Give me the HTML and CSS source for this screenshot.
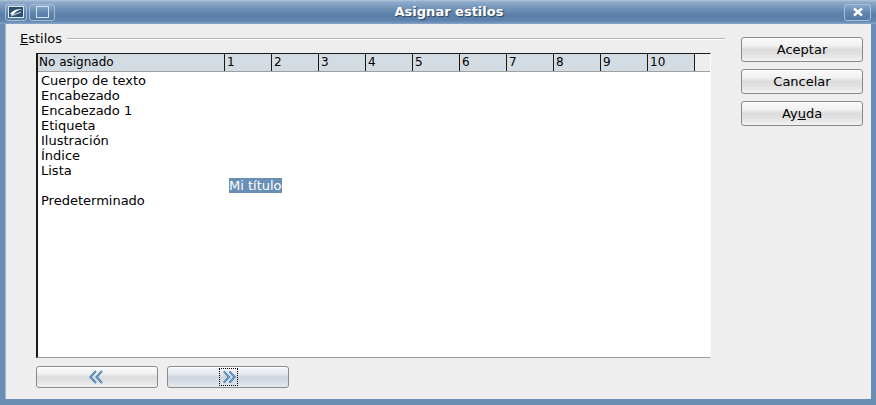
FILE: index.html
```html
<!DOCTYPE html>
<html>
<head>
  <title>Asignar estilos</title>
  <link rel="stylesheet" href="styles.css">
</head>
<body>
  <div class="window">
    <div class="titlebar">
      <div class="tb-left">
        <div class="tb-btn tb-menu">
          <svg width="16" height="12" viewBox="0 0 16 12">
            <rect x="0.5" y="0.5" width="15" height="11" fill="#2f4f6f" stroke="#dfe8f2"/>
            <path d="M2 8 C5 4, 9 3, 14 3 C10 4, 7 6, 5 9 Z" fill="#fff"/>
            <path d="M3 10 L13 6" stroke="#cfe0f0" stroke-width="1"/>
          </svg>
        </div>
        <div class="tb-btn tb-max">
          <span class="tb-square"></span>
        </div>
      </div>
      <div class="tb-title">Asignar estilos</div>
      <div class="tb-right">
        <div class="tb-btn tb-close">
          <svg width="12" height="10" viewBox="0 0 12 10">
            <path d="M2 1.5 L10 8.5 M10 1.5 L2 8.5" stroke="#fff" stroke-width="2.4"/>
          </svg>
        </div>
      </div>
    </div>

    <div class="content">
      <div class="styles-group">
        <div class="group-label"><span><u>E</u>stilos</span><div class="group-line"></div></div>

        <div class="table">
          <div class="thead">
            <div class="th th-first">No asignado</div>
            <div class="th">1</div>
            <div class="th">2</div>
            <div class="th">3</div>
            <div class="th">4</div>
            <div class="th">5</div>
            <div class="th">6</div>
            <div class="th">7</div>
            <div class="th">8</div>
            <div class="th">9</div>
            <div class="th">10</div>
            <div class="th th-rest"></div>
          </div>
          <div class="tbody">
            <div class="row">Cuerpo de texto</div>
            <div class="row">Encabezado</div>
            <div class="row">Encabezado 1</div>
            <div class="row">Etiqueta</div>
            <div class="row">Ilustración</div>
            <div class="row">Índice</div>
            <div class="row">Lista</div>
            <div class="row row-level"><span class="selected">Mi título</span></div>
            <div class="row">Predeterminado</div>
          </div>
        </div>

        <div class="nav-buttons">
          <button class="btn nav-btn">
            <svg width="18" height="14" viewBox="0 0 18 14">
              <path d="M8 1 L2.5 7 L8 13 M14 1 L8.5 7 L14 13" fill="none" stroke="#2f6fa8" stroke-width="2"/>
              <path d="M8 1 L2.5 7 L8 13 M14 1 L8.5 7 L14 13" fill="none" stroke="#9cc4e6" stroke-width="0.8"/>
            </svg>
          </button>
          <button class="btn nav-btn nav-active">
            <span class="focus">
              <svg width="18" height="14" viewBox="0 0 18 14">
                <path d="M4 1 L9.5 7 L4 13 M10 1 L15.5 7 L10 13" fill="none" stroke="#2f6fa8" stroke-width="2"/>
                <path d="M4 1 L9.5 7 L4 13 M10 1 L15.5 7 L10 13" fill="none" stroke="#9cc4e6" stroke-width="0.8"/>
              </svg>
            </span>
          </button>
        </div>
      </div>

      <div class="side-buttons">
        <button class="btn">Aceptar</button>
        <button class="btn">Cancelar</button>
        <button class="btn">Ay<u>u</u>da</button>
      </div>
    </div>
  </div>
</body>
</html>
```

FILE: styles.css
```css
body {
  margin: 0;
  font-family: "DejaVu Sans", sans-serif;
  font-size: 13px;
  color: #000;
  background: #fff;
}

.window {
  width: 876px;
  height: 405px;
  box-sizing: border-box;
  display: flex;
  flex-direction: column;
  background: #6a8db3;
  padding: 0 5px 6px 5px;
}

/* title bar */
.titlebar {
  height: 24px;
  margin: 0 -5px;
  display: flex;
  align-items: center;
  justify-content: space-between;
  background: linear-gradient(#b4c6da 0, #8eaacb 2px, #6f91b7 9px, #5a7ea8 15px, #5f84ae 21px, #88a6c8 24px);
  position: relative;
}

.tb-left, .tb-right {
  display: flex;
  gap: 2px;
  padding: 0 5px;
}

.tb-btn {
  height: 17px;
  box-sizing: border-box;
  border: 1px solid #a7bdd6;
  border-radius: 3px;
  background: linear-gradient(#8ba8c9, #5f83ad 55%, #5479a4);
  display: flex;
  align-items: center;
  justify-content: center;
}

.tb-menu {
  width: 22px;
}

.tb-max {
  width: 26px;
}

.tb-square {
  width: 11px;
  height: 10px;
  border: 1px solid #d8e3ef;
}

.tb-close {
  width: 27px;
}

.tb-title {
  position: absolute;
  left: 22px;
  right: 0;
  top: 4px;
  text-align: center;
  font-weight: bold;
  font-size: 13px;
  color: #fff;
  text-shadow: 1px 1px 1px #2c4563;
  pointer-events: none;
}

/* dialog body */
.content {
  flex: 1;
  background: #eeeeee;
  border-left: 1px solid #a3b8cf;
  display: flex;
  padding: 6px 0 0 14px;
}

.styles-group {
  width: 705px;
  display: flex;
  flex-direction: column;
}

.group-label {
  display: flex;
  align-items: center;
  height: 16px;
}

.group-line {
  flex: 1;
  margin-left: 5px;
  margin-top: 1px;
  border-top: 1px solid #b5b5b5;
  border-bottom: 1px solid #fff;
}

.table {
  margin: 7px 0 0 16px;
  width: 675px;
  height: 305px;
  box-sizing: border-box;
  background: #fff;
  border-top: 1px solid #1a1a1a;
  border-left: 2px solid #1a1a1a;
  border-right: 1px solid #fafafa;
  border-bottom: 1px solid #9a9a9a;
}

.thead {
  display: flex;
  height: 17px;
  background: #d3dbe3;
  border-bottom: 1px solid #a0a0a0;
  font-size: 12px;
}

.th {
  width: 47px;
  box-sizing: border-box;
  border-right: 1px solid #1a1a1a;
  padding: 1px 0 0 2px;
  line-height: 15px;
}

.th-first {
  width: 187px;
  padding-left: 1px;
}

.th-rest {
  flex: 1;
  width: auto;
  border-right: none;
  background: #eeeeee;
}

.tbody {
  padding: 1px 0 0 3px;
}

.row {
  height: 15px;
  line-height: 15px;
}

.row-level {
  padding-left: 188px;
}

.selected {
  background: #6a8fb5;
  color: #fff;
  display: inline-block;
}

/* buttons */
.btn {
  font-family: "DejaVu Sans", sans-serif;
  font-size: 13px;
  color: #000;
  width: 122px;
  height: 25px;
  padding: 0;
  border: 1px solid #8a8a8a;
  border-radius: 3px;
  background: linear-gradient(#fbfbfb 0, #f0f0f0 35%, #dcdcdc 50%, #e4e4e4 75%, #f3f3f3 100%);
  box-shadow: inset 0 1px 0 #fff;
}

.side-buttons {
  margin-left: 16px;
  padding-top: 7px;
  display: flex;
  flex-direction: column;
  gap: 7px;
}

.nav-buttons {
  margin: 8px 0 0 16px;
  display: flex;
  gap: 9px;
}

.nav-btn {
  height: 22px;
  display: flex;
  align-items: center;
  justify-content: center;
}

.nav-active {
  background: linear-gradient(#f4f6f9 0, #e3e8ee 35%, #cdd5df 50%, #d6dde6 75%, #e6eaf0 100%);
}

.focus {
  display: flex;
  align-items: center;
  justify-content: center;
  width: 17px;
  height: 16px;
  border: 1px dotted #000;
}
```
